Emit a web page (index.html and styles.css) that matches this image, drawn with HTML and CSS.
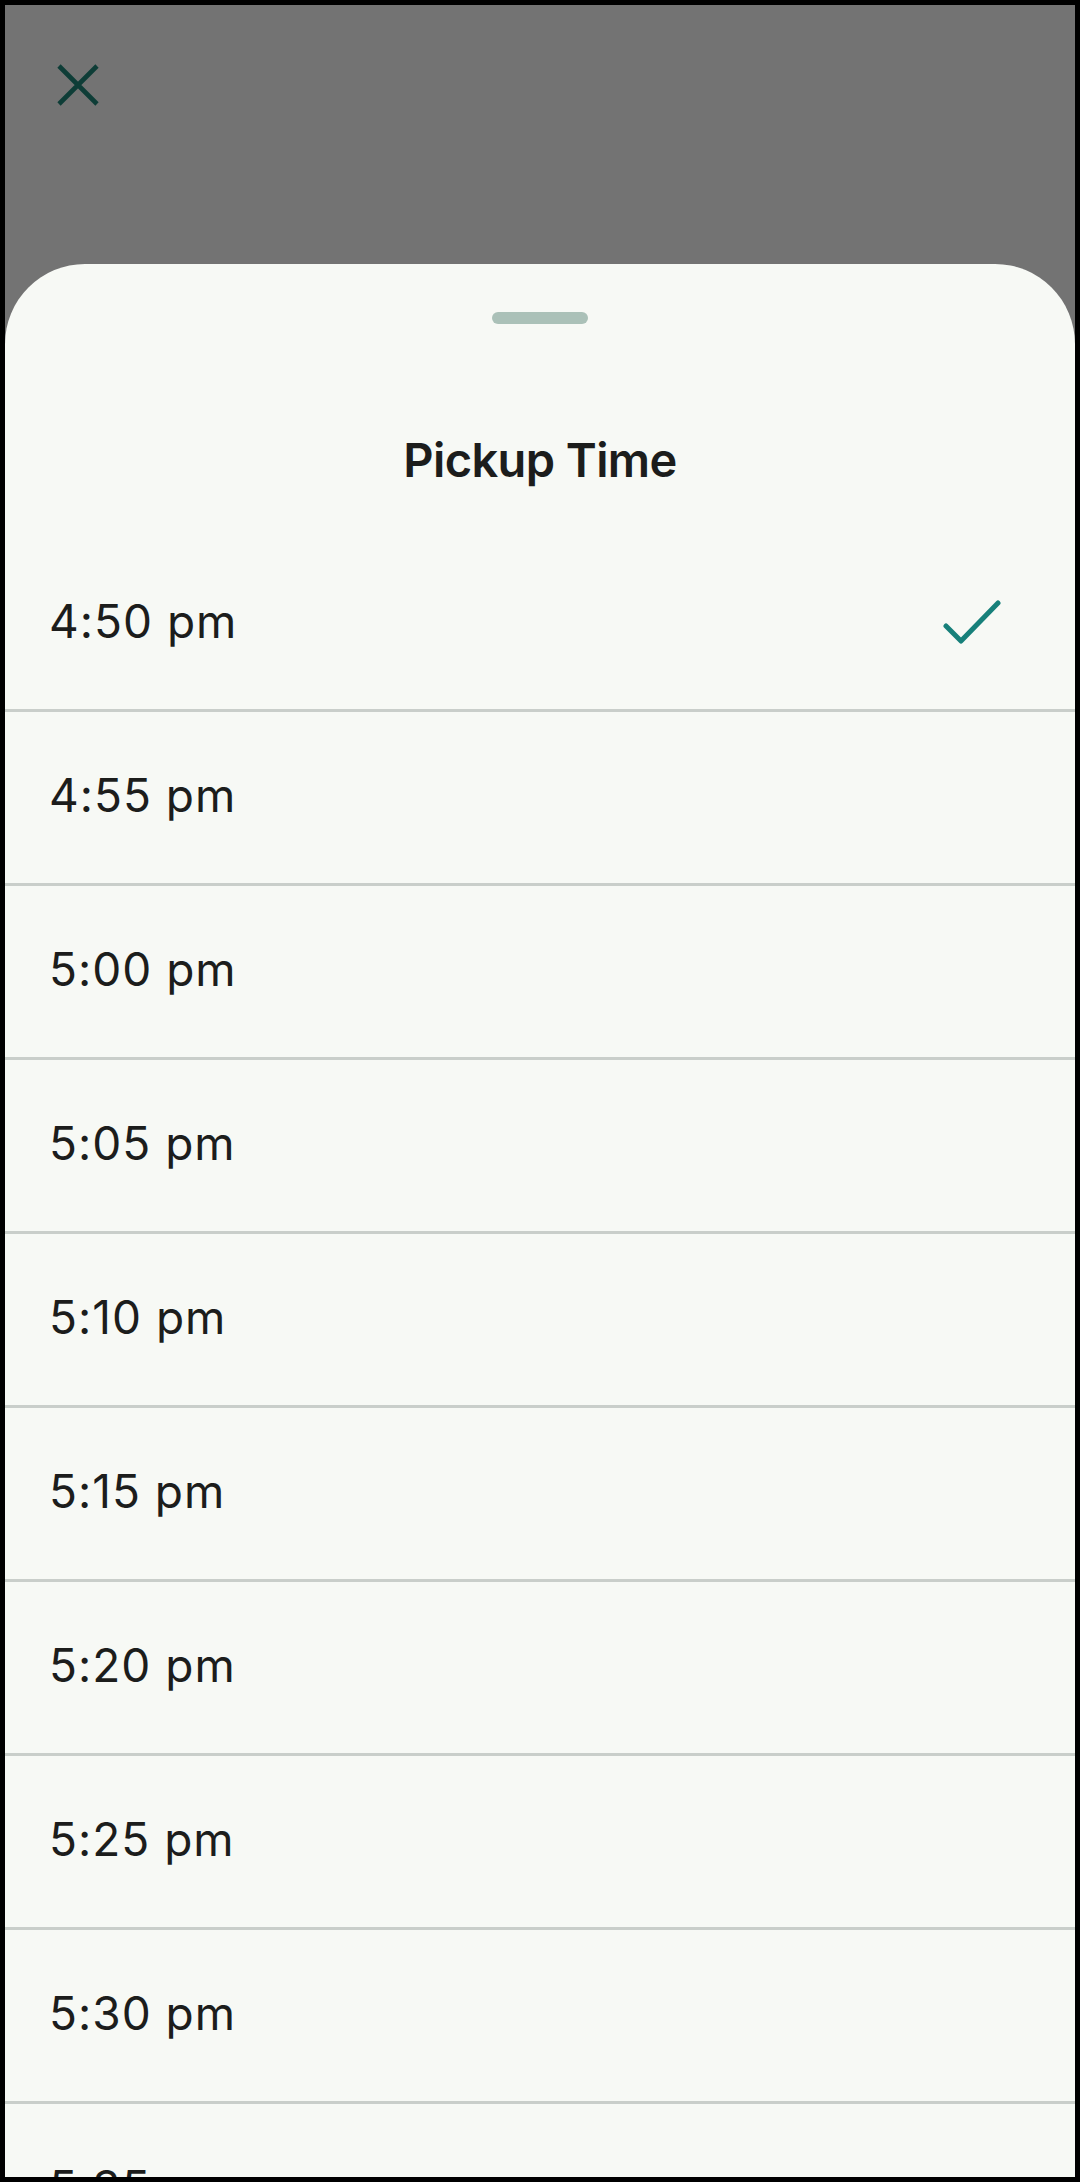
FILE: index.html
```html
<!DOCTYPE html>
<html>
<head>
<meta charset="utf-8">
<link rel="stylesheet" href="styles.css">
</head>
<body>
<div class="screen">
  <div class="overlay">
    <button class="close" aria-label="Close">
      <svg width="42" height="42" viewBox="0 0 42 42"><path d="M2 2L40 40M40 2L2 40" stroke="#0e3d37" stroke-width="4.6" fill="none"/></svg>
    </button>
  </div>
  <div class="sheet">
    <div class="handle"></div>
    <h1 class="title">Pickup Time</h1>
    <ul class="list">
      <li class="row"><span>4:50 pm</span>
        <svg class="check" width="60" height="46" viewBox="0 0 60 46"><path d="M5 27L20 42L57 4" stroke="#17807a" stroke-width="5" stroke-linecap="round" stroke-linejoin="round" fill="none"/></svg>
      </li>
      <li class="row"><span>4:55 pm</span></li>
      <li class="row"><span>5:00 pm</span></li>
      <li class="row"><span>5:05 pm</span></li>
      <li class="row"><span>5:10 pm</span></li>
      <li class="row"><span>5:15 pm</span></li>
      <li class="row"><span>5:20 pm</span></li>
      <li class="row"><span>5:25 pm</span></li>
      <li class="row"><span>5:30 pm</span></li>
      <li class="row"><span>5:35 pm</span></li>
    </ul>
  </div>
</div>
</body>
</html>
```
FILE: styles.css
```css
html, body {
  margin: 0;
  padding: 0;
  background: #000;
}
.screen {
  margin: 5px;
  width: 1070px;
  height: 2172px;
  overflow: hidden;
  background: #737373;
  font-family: Inter, "Noto Sans", sans-serif;
  color: #1c1d1c;
  display: flex;
  flex-direction: column;
}
.overlay {
  height: 259px;
  flex: none;
}
.close {
  margin: 59px 0 0 52px;
  padding: 0;
  border: 0;
  background: none;
  width: 42px;
  height: 42px;
  display: block;
}
.close svg { display: block; }
.sheet {
  flex: 1;
  background: #f7f9f5;
  border-radius: 80px 80px 0 0;
  display: flex;
  flex-direction: column;
  align-items: stretch;
}
.handle {
  width: 96px;
  height: 12px;
  border-radius: 6px;
  background: #abc1b8;
  margin: 48px auto 0;
}
.title {
  margin: 106px 0 48px;
  height: 60px;
  line-height: 60px;
  text-align: center;
  font-size: 47px;
  font-weight: 600;
  letter-spacing: -0.6px;
}
.list {
  list-style: none;
  margin: 0;
  padding: 0;
}
.row {
  height: 171px;
  border-bottom: 3px solid #c9ceca;
  display: flex;
  align-items: center;
  justify-content: space-between;
  padding: 0 74px 0 44px;
  font-size: 46px;
  font-weight: 400;
  letter-spacing: 1px;
}
.row span {
  position: relative;
  top: -3px;
}
.check {
  display: block;
  margin-top: -4px;
}
```
